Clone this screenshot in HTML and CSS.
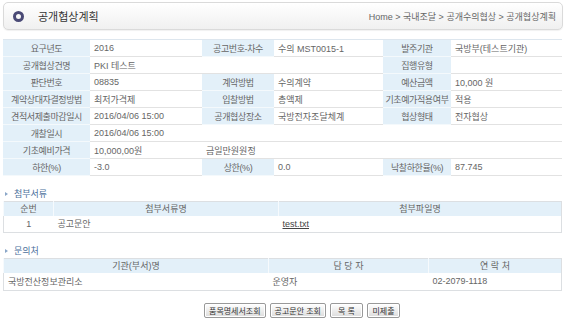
FILE: index.html
```html
<!DOCTYPE html>
<html lang="ko">
<head>
    <meta charset="UTF-8">
    <title>공개협상계획</title>
    <link rel="stylesheet" href="styles.css">
</head>
<body>
    <div class="page">
        <div class="titlebar">
            <div class="title"><span class="ring"></span>공개협상계획</div>
            <div class="path">Home &gt; 국내조달 &gt; 공개수의협상 &gt; 공개협상계획</div>
        </div>

        <table class="info">
            <colgroup>
                <col style="width:87px"><col style="width:112px">
                <col style="width:72px"><col style="width:109px">
                <col style="width:68px"><col style="width:111px">
            </colgroup>
            <tr>
                <td class="th">요구년도</td><td>2016</td>
                <td class="th">공고번호-차수</td><td>수의 MST0015-1</td>
                <td class="th">발주기관</td><td>국방부(테스트기관)</td>
            </tr>
            <tr>
                <td class="th">공개협상건명</td><td colspan="3">PKI 테스트</td>
                <td class="th">집행유형</td><td></td>
            </tr>
            <tr>
                <td class="th">판단번호</td><td>08835</td>
                <td class="th">계약방법</td><td>수의계약</td>
                <td class="th">예산금액</td><td>10,000 원</td>
            </tr>
            <tr>
                <td class="th">계약상대자결정방법</td><td>최저가격제</td>
                <td class="th">입찰방법</td><td>총액제</td>
                <td class="th">기초예가적용여부</td><td>적용</td>
            </tr>
            <tr>
                <td class="th">견적서제출마감일시</td><td>2016/04/06 15:00</td>
                <td class="th">공개협상장소</td><td>국방전자조달체계</td>
                <td class="th">협상형태</td><td>전자협상</td>
            </tr>
            <tr>
                <td class="th">개찰일시</td><td colspan="5">2016/04/06 15:00</td>
            </tr>
            <tr>
                <td class="th">기초예비가격</td><td>10,000,00원</td>
                <td colspan="4">금일만원원정</td>
            </tr>
            <tr>
                <td class="th">하한(%)</td><td>-3.0</td>
                <td class="th">상한(%)</td><td>0.0</td>
                <td class="th">낙찰하한율(%)</td><td>87.745</td>
            </tr>
        </table>

        <h3 class="subtitle">첨부서류</h3>
        <table class="list">
            <colgroup>
                <col style="width:50px"><col style="width:225px"><col>
            </colgroup>
            <tr class="head">
                <td>순번</td><td>첨부서류명</td><td>첨부파일명</td>
            </tr>
            <tr>
                <td class="center">1</td><td>공고문안</td><td><a href="#" class="file">test.txt</a></td>
            </tr>
        </table>

        <h3 class="subtitle">문의처</h3>
        <table class="list contact">
            <colgroup>
                <col style="width:265px"><col style="width:160px"><col>
            </colgroup>
            <tr class="head">
                <td>기관(부서)명</td><td>담 당 자</td><td>연 락 처</td>
            </tr>
            <tr>
                <td>국방전산정보관리소</td><td>운영자</td><td>02-2079-1118</td>
            </tr>
        </table>

        <div class="buttons">
            <button>품목명세서조회</button>
            <button>공고문안 조회</button>
            <button class="short">목 록</button>
            <button class="short">미제출</button>
        </div>
    </div>
</body>
</html>
```

FILE: styles.css
```css
body {
    margin: 0;
    font-family: "Liberation Sans", "Noto Sans CJK KR", sans-serif;
    font-size: 9px;
    color: #666;
    background-color: #fff;
}

.page {
    padding: 2px 3px 0 3px;
}

.titlebar {
    height: 26px;
    display: flex;
    align-items: center;
    justify-content: space-between;
    padding: 0 6px 0 9px;
    border: 1px solid #dadada;
    border-radius: 5px;
    background: linear-gradient(#ffffff, #f0f0f0);
    box-shadow: 0 1px 1px rgba(0, 0, 0, 0.06);
}

.title {
    display: flex;
    align-items: center;
    font-size: 11px;
    color: #333;
}

.ring {
    width: 5px;
    height: 5px;
    border: 3px solid #4a4a76;
    border-radius: 50%;
    margin-right: 14px;
}

.path {
    color: #666;
    font-size: 9px;
}

table {
    border-collapse: collapse;
    width: 559px;
    table-layout: fixed;
}

td {
    padding: 0 4px;
    white-space: nowrap;
    overflow: hidden;
}

.info {
    margin-top: 9px;
    border-top: 1px solid #dde6ee;
}

.info tr {
    height: 17px;
}

.info td {
    border-bottom: 1px solid #e2e2e2;
}

.info .th {
    padding: 0;
    letter-spacing: -0.4px;
    background-color: #e3f0f9;
    text-align: center;
    border-bottom: 1px solid #f4f9fc;
}

.subtitle {
    margin: 12px 0 1px 0;
    height: 12px;
    line-height: 12px;
    font-size: 9px;
    font-weight: normal;
    color: #4b6f9c;
    display: flex;
    align-items: center;
}

.subtitle::before {
    content: "";
    width: 0;
    height: 0;
    border-top: 2px solid transparent;
    border-bottom: 2px solid transparent;
    border-left: 3px solid #8aa6c8;
    margin: 0 6px 0 2px;
}

.list {
    border: 1px solid #dcdfe2;
}

.list tr {
    height: 17px;
}

.list .head {
    height: 14px;
}

.list .head td {
    background-color: #e3f0f9;
    text-align: center;
    border-left: 1px solid #f6fafd;
}

.contact tr {
    height: 18px;
}

.center {
    text-align: center;
}

.file {
    color: #444;
    text-decoration: underline;
}

.buttons {
    margin-top: 12px;
    padding-left: 38px;
    display: flex;
    justify-content: center;
    gap: 4px;
}

button {
    height: 15px;
    padding: 0 4px;
    font-family: "Liberation Sans", "Noto Sans CJK KR", sans-serif;
    font-size: 8px;
    color: #333;
    border: 1px solid #999;
    border-radius: 2px;
    background: linear-gradient(#ffffff, #dcdcdc);
    box-shadow: inset 0 0 0 1px #fff;
    cursor: pointer;
}

button.short {
    min-width: 33px;
}
```
